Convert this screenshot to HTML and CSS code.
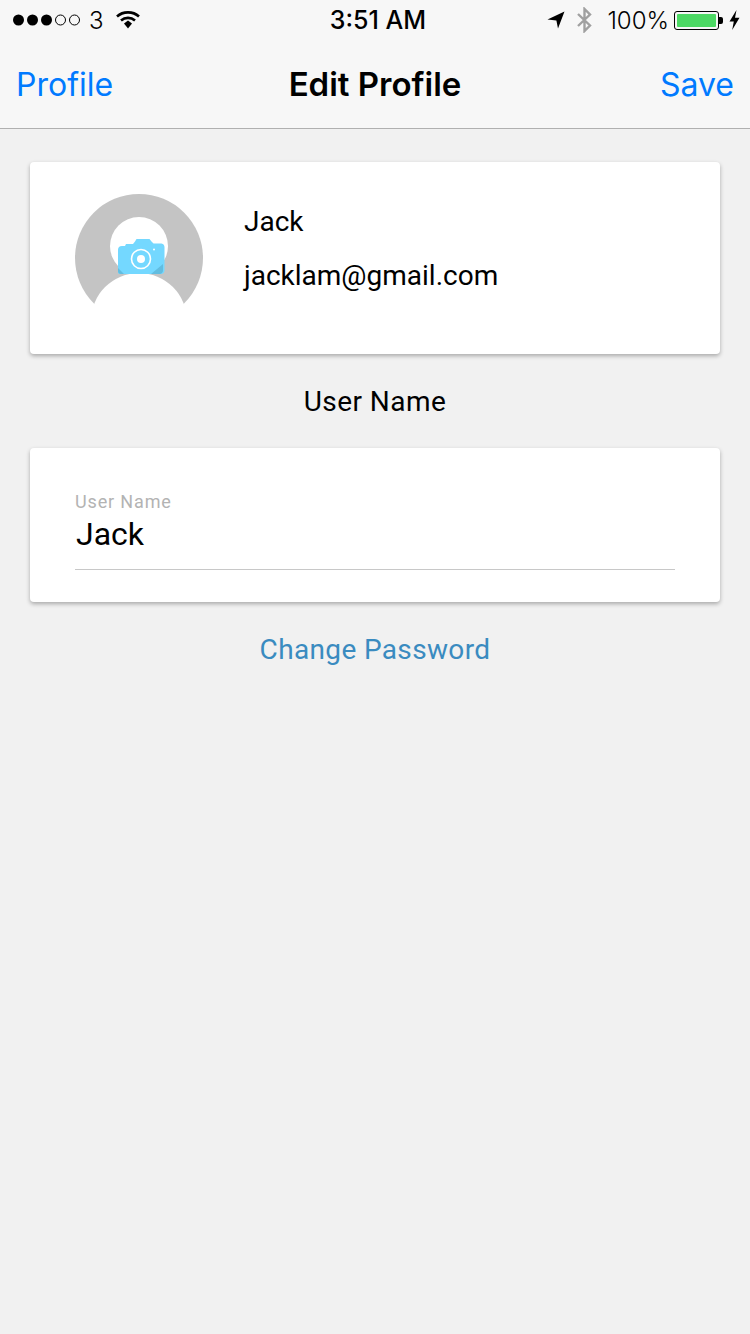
FILE: index.html
```html
<!DOCTYPE html>
<html>
<head>
    <title>Edit Profile</title>
    <link rel="stylesheet" href="styles.css">
</head>
<body>
    <header class="top-bar">
        <div class="status-bar">
            <div class="status-side">
                <svg class="signal" width="68" height="14" viewBox="0 0 68 14">
                    <circle cx="5.500" cy="7" r="5.500" fill="#000"/>
                    <circle cx="19.500" cy="7" r="5.500" fill="#000"/>
                    <circle cx="33.500" cy="7" r="5.500" fill="#000"/>
                    <circle cx="47.500" cy="7" r="5" fill="none" stroke="#000" stroke-width="1"/>
                    <circle cx="61.500" cy="7" r="5" fill="none" stroke="#000" stroke-width="1"/>
                </svg>
                <span class="carrier">3</span>
                <svg class="wifi" width="24" height="19" viewBox="0 0 24 19">
                    <path d="M1 6.500C7 1 17 1 23 6.500" fill="none" stroke="#000" stroke-width="2.600"/>
                    <path d="M5 10.500C9 7 15 7 19 10.500" fill="none" stroke="#000" stroke-width="2.600"/>
                    <path d="M8 13.500L12 10.500L16 13.500L12 18.500Z" fill="#000"/>
                </svg>
            </div>
            <div class="clock">3:51 AM</div>
            <div class="status-side status-right">
                <svg width="18" height="18" viewBox="0 0 18 18">
                    <path d="M0.500 8.600L17.500 0.500L11 17.500L9.400 9.600Z" fill="#000"/>
                </svg>
                <svg class="bluetooth" width="15" height="26" viewBox="0 0 15 26">
                    <path d="M1 7L13 18.500L7.500 24V2L13 7.500L1 19" fill="none" stroke="#a0a0a0" stroke-width="2.400"/>
                </svg>
                <span class="percent">100%</span>
                <div class="battery">
                    <div class="battery-body"><div class="battery-fill"></div></div>
                    <div class="battery-tip"></div>
                </div>
                <svg width="11" height="20" viewBox="0 0 11 20">
                    <path d="M7.500 0L0.500 11.500H4.800L3.200 20L10.500 7.800H6Z" fill="#000"/>
                </svg>
            </div>
        </div>
        <nav class="nav-bar">
            <span class="nav-link">Profile</span>
            <span class="nav-title">Edit Profile</span>
            <span class="nav-link">Save</span>
        </nav>
    </header>

    <main class="content">
        <section class="card profile-card">
            <svg class="avatar" width="128" height="128" viewBox="0 0 128 128">
                <circle cx="64" cy="64" r="64" fill="#c4c4c4"/>
                <circle cx="64" cy="52" r="29" fill="#fff"/>
                <circle cx="64" cy="127" r="48" fill="#fff"/>
                <rect x="10" y="111" width="108" height="17" fill="#fff"/>
                <path d="M43 79V56a4 4 0 0 1 4-4h3l1-2h7l2-2.500 1.500-2.500h13l2 2.500 2 2h8a4 4 0 0 1 3 4V76a4 4 0 0 1-3 4H46a3 3 0 0 1-3-1Z" fill="#74d8ff"/>
                <path d="M88 70V76a4 4 0 0 1-3 4H76Z" fill="#62bde0"/>
                <path d="M43 74V77a3 3 0 0 0 3 3H49Z" fill="#62bde0"/>
                <circle cx="66" cy="65" r="9.500" fill="none" stroke="#fff" stroke-width="1.600"/>
                <circle cx="66" cy="65" r="4" fill="#fff"/>
                <circle cx="79" cy="55.500" r="1" fill="#fff"/>
            </svg>
            <div class="profile-text">
                <div>Jack</div>
                <div>jacklam@gmail.com</div>
            </div>
        </section>

        <h2 class="section-title">User Name</h2>

        <section class="card name-card">
            <label class="field-label" for="user-name">User Name</label>
            <input class="field-input" id="user-name" type="text" value="Jack">
        </section>

        <a class="password-link" href="#">Change Password</a>
    </main>
</body>
</html>
```

FILE: styles.css
```css
* {
    box-sizing: border-box;
}

body {
    margin: 0;
    min-height: 1334px;
    font-family: Roboto, "Liberation Sans", sans-serif;
    background-color: #f1f1f1;
    color: #000;
}

.top-bar {
    height: 129px;
    background-color: #f7f7f7;
    border-bottom: 1px solid #b0b0b0;
}

.status-bar {
    display: flex;
    justify-content: space-between;
    align-items: center;
    height: 40px;
    padding: 0 10px 0 13px;
    position: relative;
    font-family: Inter, "Liberation Sans", sans-serif;
}

.status-side {
    display: flex;
    align-items: center;
}

.status-right svg {
    flex: none;
}

.carrier {
    font-size: 24px;
    font-weight: 300;
    margin-left: 8px;
}

.wifi {
    margin-left: 12px;
    margin-bottom: 1px;
}

.clock {
    position: absolute;
    left: 6px;
    right: 0;
    text-align: center;
    font-size: 25px;
    font-weight: 500;
}

.bluetooth {
    margin-left: 12px;
}

.percent {
    margin-left: 15px;
    font-size: 24px;
    font-weight: 300;
}

.battery {
    display: flex;
    align-items: center;
    margin: 0 6px 0 5px;
}

.battery-body {
    width: 45px;
    height: 19px;
    padding: 2px;
    border: 1px solid #000;
    border-radius: 3px;
}

.battery-fill {
    height: 100%;
    background-color: #4cd964;
    border-radius: 1px;
}

.battery-tip {
    width: 4px;
    height: 7px;
    background-color: #000;
    border-radius: 0 2px 2px 0;
}

.nav-bar {
    display: flex;
    justify-content: space-between;
    align-items: center;
    height: 88px;
    padding: 0 16px;
    font-family: Inter, "Liberation Sans", sans-serif;
    font-size: 32px;
    position: relative;
}

.nav-link {
    color: #007aff;
    font-weight: 400;
}

.nav-title {
    position: absolute;
    left: 0;
    right: 0;
    text-align: center;
    font-weight: 600;
    font-size: 33px;
}

.content {
    display: flex;
    flex-direction: column;
    align-items: center;
    padding: 33px 30px 0;
}

.card {
    width: 100%;
    background-color: #fff;
    border-radius: 4px;
    box-shadow: 0 2px 4px rgba(0, 0, 0, 0.3);
}

.profile-card {
    display: flex;
    align-items: center;
    height: 192px;
    padding-left: 45px;
}

.avatar {
    flex: none;
}

.profile-text {
    display: flex;
    flex-direction: column;
    gap: 21px;
    margin-left: 41px;
    margin-bottom: 19px;
    font-size: 28px;
    line-height: 33px;
}

.section-title {
    margin: 30px 0 29px;
    font-size: 28px;
    line-height: 35px;
    font-weight: 400;
    letter-spacing: 0.45px;
}

.name-card {
    height: 154px;
    padding: 43px 45px 0;
}

.field-label {
    display: block;
    font-size: 18px;
    line-height: 21px;
    color: #b3b3b3;
    letter-spacing: 0.85px;
}

.field-input {
    display: block;
    width: 100%;
    height: 58px;
    padding: 0 0 13px 1px;
    border: none;
    border-bottom: 1px solid #c8c8c8;
    border-radius: 0;
    outline: none;
    background: none;
    font-family: inherit;
    font-size: 32px;
    color: #000;
}

.password-link {
    margin-top: 30px;
    font-size: 28px;
    line-height: 35px;
    letter-spacing: 0.35px;
    color: #3a8bc0;
    text-decoration: none;
}
```
